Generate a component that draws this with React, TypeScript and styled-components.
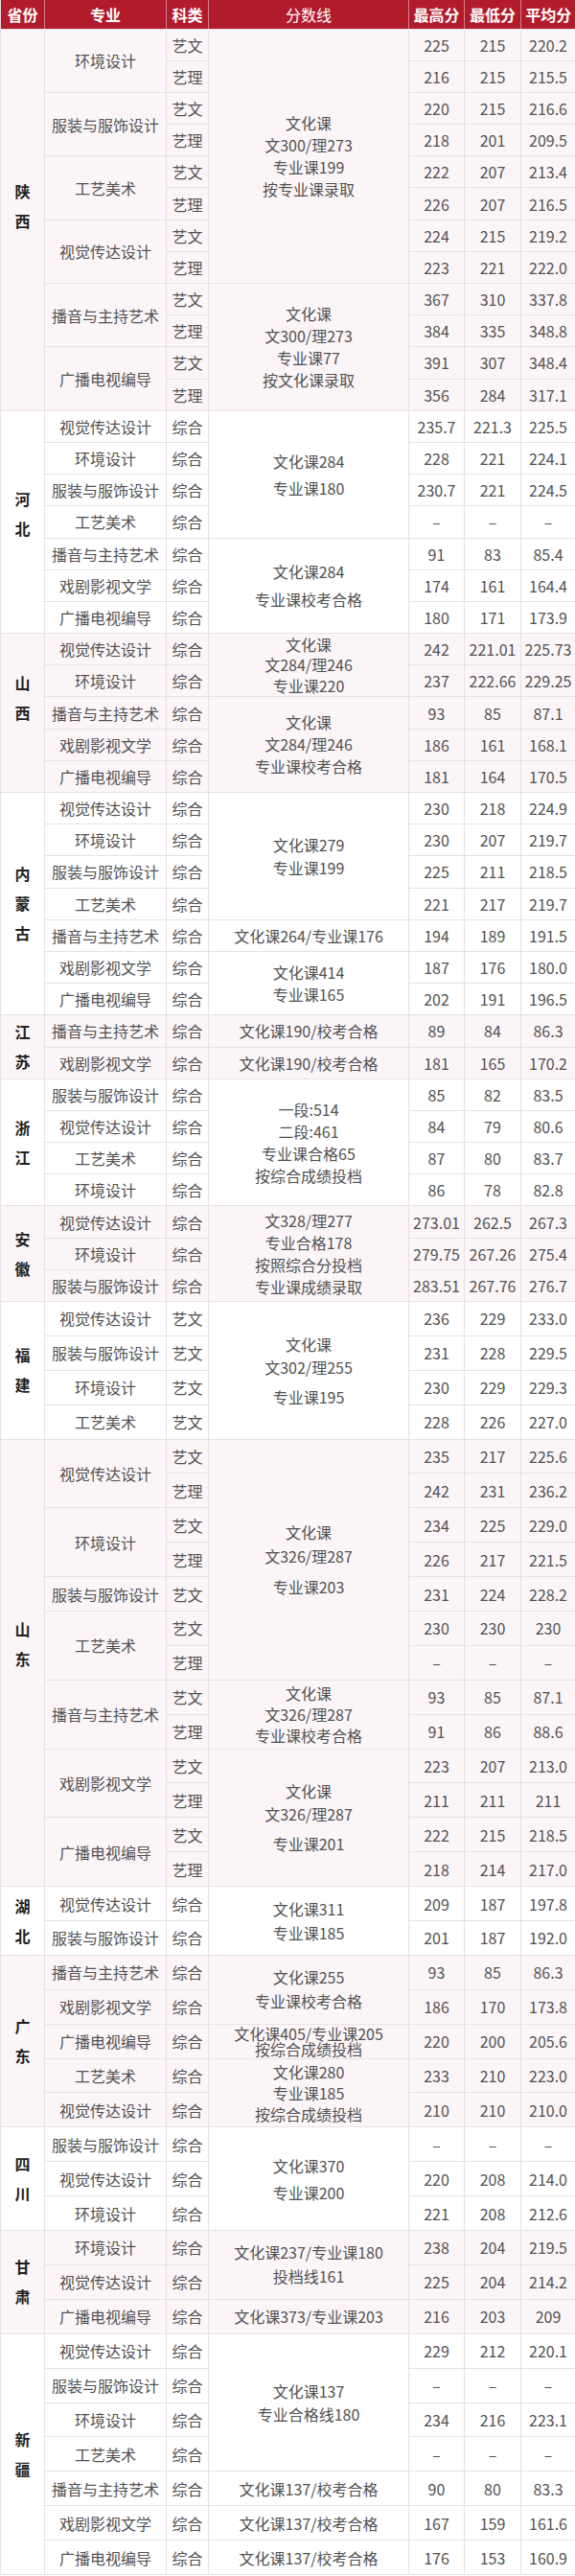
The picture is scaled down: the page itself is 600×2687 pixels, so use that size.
import { Fragment } from "react";
import styled, { createGlobalStyle } from "styled-components";

const GlobalStyle = createGlobalStyle`
  body {
    margin: 0;
    background: #ffffff;
    font-family: "Noto Sans CJK SC", "Noto Sans", sans-serif;
  }
`;

type Entry = [string, string, string, string];
type Major = { name: string; entries: Entry[] };
type Score = { span: number; lines: string[]; lh?: number; gapAt?: number };
type Group = {
    province: string;
    pink: boolean;
    rowH: number;
    lift?: number;
    majors: Major[];
    scores: Score[];
};

const D = "–";
const one = (name: string, kind: string, max: string, min: string, avg: string): Major => ({
    name,
    entries: [[kind, max, min, avg]],
});

const groups: Group[] = [
    {
        province: "陕西", pink: true, rowH: 33.2, lift: 14,
        majors: [
            { name: "环境设计", entries: [["艺文", "225", "215", "220.2"], ["艺理", "216", "215", "215.5"]] },
            { name: "服装与服饰设计", entries: [["艺文", "220", "215", "216.6"], ["艺理", "218", "201", "209.5"]] },
            { name: "工艺美术", entries: [["艺文", "222", "207", "213.4"], ["艺理", "226", "207", "216.5"]] },
            { name: "视觉传达设计", entries: [["艺文", "224", "215", "219.2"], ["艺理", "223", "221", "222.0"]] },
            { name: "播音与主持艺术", entries: [["艺文", "367", "310", "337.8"], ["艺理", "384", "335", "348.8"]] },
            { name: "广播电视编导", entries: [["艺文", "391", "307", "348.4"], ["艺理", "356", "284", "317.1"]] },
        ],
        scores: [
            { span: 8, lines: ["文化课", "文300/理273", "专业课199", "按专业课录取"], lh: 23 },
            { span: 4, lines: ["文化课", "文300/理273", "专业课77", "按文化课录取"], lh: 23 },
        ],
    },
    {
        province: "河北", pink: false, rowH: 33.2, lift: 8,
        majors: [
            one("视觉传达设计", "综合", "235.7", "221.3", "225.5"),
            one("环境设计", "综合", "228", "221", "224.1"),
            one("服装与服饰设计", "综合", "230.7", "221", "224.5"),
            one("工艺美术", "综合", D, D, D),
            one("播音与主持艺术", "综合", "91", "83", "85.4"),
            one("戏剧影视文学", "综合", "174", "161", "164.4"),
            one("广播电视编导", "综合", "180", "171", "173.9"),
        ],
        scores: [
            { span: 4, lines: ["文化课284", "专业课180"], lh: 28 },
            { span: 3, lines: ["文化课284", "专业课校考合格"], lh: 29 },
        ],
    },
    {
        province: "山西", pink: true, rowH: 33.2, lift: 16,
        majors: [
            one("视觉传达设计", "综合", "242", "221.01", "225.73"),
            one("环境设计", "综合", "237", "222.66", "229.25"),
            one("播音与主持艺术", "综合", "93", "85", "87.1"),
            one("戏剧影视文学", "综合", "186", "161", "168.1"),
            one("广播电视编导", "综合", "181", "164", "170.5"),
        ],
        scores: [
            { span: 2, lines: ["文化课", "文284/理246", "专业课220"], lh: 21.5 },
            { span: 3, lines: ["文化课", "文284/理246", "专业课校考合格"], lh: 23 },
        ],
    },
    {
        province: "内蒙古", pink: false, rowH: 33.2,
        majors: [
            one("视觉传达设计", "综合", "230", "218", "224.9"),
            one("环境设计", "综合", "230", "207", "219.7"),
            one("服装与服饰设计", "综合", "225", "211", "218.5"),
            one("工艺美术", "综合", "221", "217", "219.7"),
            one("播音与主持艺术", "综合", "194", "189", "191.5"),
            one("戏剧影视文学", "综合", "187", "176", "180.0"),
            one("广播电视编导", "综合", "202", "191", "196.5"),
        ],
        scores: [
            { span: 4, lines: ["文化课279", "专业课199"], lh: 24 },
            { span: 1, lines: ["文化课264/专业课176"] },
            { span: 2, lines: ["文化课414", "专业课165"], lh: 23 },
        ],
    },
    {
        province: "江苏", pink: true, rowH: 33.2,
        majors: [
            one("播音与主持艺术", "综合", "89", "84", "86.3"),
            one("戏剧影视文学", "综合", "181", "165", "170.2"),
        ],
        scores: [
            { span: 1, lines: ["文化课190/校考合格"] },
            { span: 1, lines: ["文化课190/校考合格"] },
        ],
    },
    {
        province: "浙江", pink: false, rowH: 33.2,
        majors: [
            one("服装与服饰设计", "综合", "85", "82", "83.5"),
            one("视觉传达设计", "综合", "84", "79", "80.6"),
            one("工艺美术", "综合", "87", "80", "83.7"),
            one("环境设计", "综合", "86", "78", "82.8"),
        ],
        scores: [{ span: 4, lines: ["一段:514", "二段:461", "专业课合格65", "按综合成绩投档"], lh: 23 }],
    },
    {
        province: "安徽", pink: true, rowH: 33.2,
        majors: [
            one("视觉传达设计", "综合", "273.01", "262.5", "267.3"),
            one("环境设计", "综合", "279.75", "267.26", "275.4"),
            one("服装与服饰设计", "综合", "283.51", "267.76", "276.7"),
        ],
        scores: [{ span: 3, lines: ["文328/理277", "专业合格178", "按照综合分投档", "专业课成绩录取"], lh: 23 }],
    },
    {
        province: "福建", pink: false, rowH: 35.9,
        majors: [
            one("视觉传达设计", "艺文", "236", "229", "233.0"),
            one("服装与服饰设计", "艺文", "231", "228", "229.5"),
            one("环境设计", "艺文", "230", "229", "229.3"),
            one("工艺美术", "艺文", "228", "226", "227.0"),
        ],
        scores: [{ span: 4, lines: ["文化课", "文302/理255", "专业课195"], lh: 24, gapAt: 2 }],
    },
    {
        province: "山东", pink: true, rowH: 35.9, lift: 19,
        majors: [
            { name: "视觉传达设计", entries: [["艺文", "235", "217", "225.6"], ["艺理", "242", "231", "236.2"]] },
            { name: "环境设计", entries: [["艺文", "234", "225", "229.0"], ["艺理", "226", "217", "221.5"]] },
            { name: "服装与服饰设计", entries: [["艺文", "231", "224", "228.2"]] },
            { name: "工艺美术", entries: [["艺文", "230", "230", "230"], ["艺理", D, D, D]] },
            { name: "播音与主持艺术", entries: [["艺文", "93", "85", "87.1"], ["艺理", "91", "86", "88.6"]] },
            { name: "戏剧影视文学", entries: [["艺文", "223", "207", "213.0"], ["艺理", "211", "211", "211"]] },
            { name: "广播电视编导", entries: [["艺文", "222", "215", "218.5"], ["艺理", "218", "214", "217.0"]] },
        ],
        scores: [
            { span: 7, lines: ["文化课", "文326/理287", "专业课203"], lh: 25, gapAt: 2 },
            { span: 2, lines: ["文化课", "文326/理287", "专业课校考合格"], lh: 22 },
            { span: 4, lines: ["文化课", "文326/理287", "专业课201"], lh: 24, gapAt: 2 },
        ],
    },
    {
        province: "湖北", pink: false, rowH: 35.9,
        majors: [
            one("视觉传达设计", "综合", "209", "187", "197.8"),
            one("服装与服饰设计", "综合", "201", "187", "192.0"),
        ],
        scores: [{ span: 2, lines: ["文化课311", "专业课185"], lh: 25 }],
    },
    {
        province: "广东", pink: true, rowH: 35.9,
        majors: [
            one("播音与主持艺术", "综合", "93", "85", "86.3"),
            one("戏剧影视文学", "综合", "186", "170", "173.8"),
            one("广播电视编导", "综合", "220", "200", "205.6"),
            one("工艺美术", "综合", "233", "210", "223.0"),
            one("视觉传达设计", "综合", "210", "210", "210.0"),
        ],
        scores: [
            { span: 2, lines: ["文化课255", "专业课校考合格"], lh: 25 },
            { span: 1, lines: ["文化课405/专业课205", "按综合成绩投档"], lh: 16 },
            { span: 2, lines: ["文化课280", "专业课185", "按综合成绩投档"], lh: 22 },
        ],
    },
    {
        province: "四川", pink: false, rowH: 35.9,
        majors: [
            one("服装与服饰设计", "综合", D, D, D),
            one("视觉传达设计", "综合", "220", "208", "214.0"),
            one("环境设计", "综合", "221", "208", "212.6"),
        ],
        scores: [{ span: 3, lines: ["文化课370", "专业课200"], lh: 28 }],
    },
    {
        province: "甘肃", pink: true, rowH: 35.9,
        majors: [
            one("环境设计", "综合", "238", "204", "219.5"),
            one("视觉传达设计", "综合", "225", "204", "214.2"),
            one("广播电视编导", "综合", "216", "203", "209"),
        ],
        scores: [
            { span: 2, lines: ["文化课237/专业课180", "投档线161"], lh: 25 },
            { span: 1, lines: ["文化课373/专业课203"] },
        ],
    },
    {
        province: "新疆", pink: false, rowH: 35.9,
        majors: [
            one("视觉传达设计", "综合", "229", "212", "220.1"),
            one("服装与服饰设计", "综合", D, D, D),
            one("环境设计", "综合", "234", "216", "223.1"),
            one("工艺美术", "综合", D, D, D),
            one("播音与主持艺术", "综合", "90", "80", "83.3"),
            one("戏剧影视文学", "综合", "167", "159", "161.6"),
            one("广播电视编导", "综合", "176", "153", "160.9"),
        ],
        scores: [
            { span: 4, lines: ["文化课137", "专业合格线180"], lh: 24 },
            { span: 1, lines: ["文化课137/校考合格"] },
            { span: 1, lines: ["文化课137/校考合格"] },
            { span: 1, lines: ["文化课137/校考合格"] },
        ],
    },
];

const Table = styled.table`
    width: 600px;
    border-collapse: collapse;
    table-layout: fixed;
    font-size: 16px;
    color: #525252;
    border-left: 1px solid #e4dfe2;
`;

const HeadRow = styled.tr`
    height: 30px;
    background: #b21b2c;
`;

const HeadCell = styled.th<{ $light?: boolean }>`
    padding: 0;
    color: #ffffff;
    font-size: 16px;
    font-weight: ${(p) => (p.$light ? 400 : 700)};
    text-align: center;
    border-right: 1px solid rgba(255, 255, 255, 0.45);
    &:last-child {
        border-right: none;
    }
`;

const BodyRow = styled.tr<{ $h: number; $pink: boolean }>`
    height: ${(p) => p.$h}px;
    background: ${(p) => (p.$pink ? "#fcf5f8" : "#ffffff")};
`;

const Cell = styled.td`
    padding: 0;
    border: 1px solid #e6e1e4;
    text-align: center;
    vertical-align: middle;
    white-space: nowrap;
    line-height: 22px;
`;

const ProvinceCell = styled(Cell)<{ $lift: number }>`
    color: #1f1f1f;
    font-weight: 700;
    padding-bottom: ${(p) => p.$lift * 2}px;
`;

const ProvinceChar = styled.span`
    display: block;
    line-height: 31px;
`;

const ScoreCell = styled(Cell)<{ $lh: number }>`
    line-height: ${(p) => p.$lh}px;
`;

const ScoreLine = styled.div<{ $gap: boolean }>`
    margin-top: ${(p) => (p.$gap ? 7 : 0)}px;
`;

const widths = [46, 127, 44, 209, 58, 59, 57];

function GroupRows({ group }: { group: Group }) {
    const rows: { major: Major; idx: number }[] = [];
    group.majors.forEach((m) => m.entries.forEach((_, idx) => rows.push({ major: m, idx })));

    const scoreAt = new Map<number, Score>();
    let pos = 0;
    group.scores.forEach((s) => {
        scoreAt.set(pos, s);
        pos += s.span;
    });

    return (
        <>
            {rows.map((r, i) => {
                const [kind, max, min, avg] = r.major.entries[r.idx];
                const score = scoreAt.get(i);
                return (
                    <BodyRow key={i} $h={group.rowH} $pink={group.pink}>
                        {i === 0 && (
                            <ProvinceCell rowSpan={rows.length} $lift={group.lift ?? 0}>
                                {group.province.split("").map((ch, k) => (
                                    <ProvinceChar key={k}>{ch}</ProvinceChar>
                                ))}
                            </ProvinceCell>
                        )}
                        {r.idx === 0 && <Cell rowSpan={r.major.entries.length}>{r.major.name}</Cell>}
                        <Cell>{kind}</Cell>
                        {score && (
                            <ScoreCell rowSpan={score.span} $lh={score.lh ?? 22}>
                                {score.lines.map((line, k) => (
                                    <ScoreLine key={k} $gap={score.gapAt === k}>{line}</ScoreLine>
                                ))}
                            </ScoreCell>
                        )}
                        <Cell>{max}</Cell>
                        <Cell>{min}</Cell>
                        <Cell>{avg}</Cell>
                    </BodyRow>
                );
            })}
        </>
    );
}

export default function App() {
    return (
        <>
            <GlobalStyle />
            <Table>
                <colgroup>
                    {widths.map((w, i) => (
                        <col key={i} style={{ width: w }} />
                    ))}
                </colgroup>
                <thead>
                    <HeadRow>
                        <HeadCell>省份</HeadCell>
                        <HeadCell>专业</HeadCell>
                        <HeadCell>科类</HeadCell>
                        <HeadCell $light>分数线</HeadCell>
                        <HeadCell>最高分</HeadCell>
                        <HeadCell>最低分</HeadCell>
                        <HeadCell>平均分</HeadCell>
                    </HeadRow>
                </thead>
                <tbody>
                    {groups.map((g) => (
                        <Fragment key={g.province}>
                            <GroupRows group={g} />
                        </Fragment>
                    ))}
                </tbody>
            </Table>
        </>
    );
}
